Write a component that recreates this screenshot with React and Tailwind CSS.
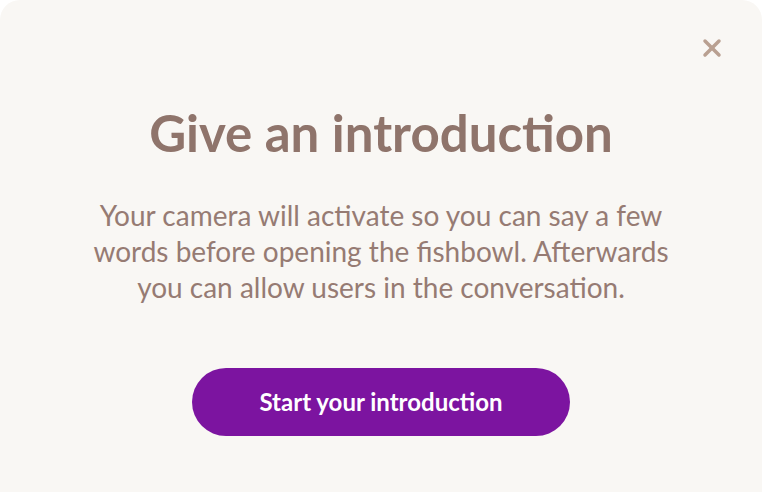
import { X } from "lucide-react";

export default function App() {
  return (
    <div className="min-h-screen bg-white font-['Lato',sans-serif]">
      <div className="relative flex h-[492px] flex-col items-center rounded-t-[20px] bg-[#f9f7f4]">
        <button className="absolute right-[36px] top-[34px] text-[#b9a091]">
          <X className="h-[28px] w-[28px]" strokeWidth={3} />
        </button>

        <h2 className="mt-[103px] text-[51px] font-bold leading-[60px] text-[#8f746b]">
          Give an introduction
        </h2>

        <p className="mt-[34px] max-w-[600px] text-center text-[28px] leading-[36px] text-[#967b73]">
          Your camera will activate so you can say a few words before opening
          the fishbowl. Afterwards you can allow users in the conversation.
        </p>

        <button className="mt-[63px] h-[68px] w-[378px] rounded-full bg-[#7c14a0] text-[24px] font-bold text-white">
          Start your introduction
        </button>
      </div>
    </div>
  );
}
